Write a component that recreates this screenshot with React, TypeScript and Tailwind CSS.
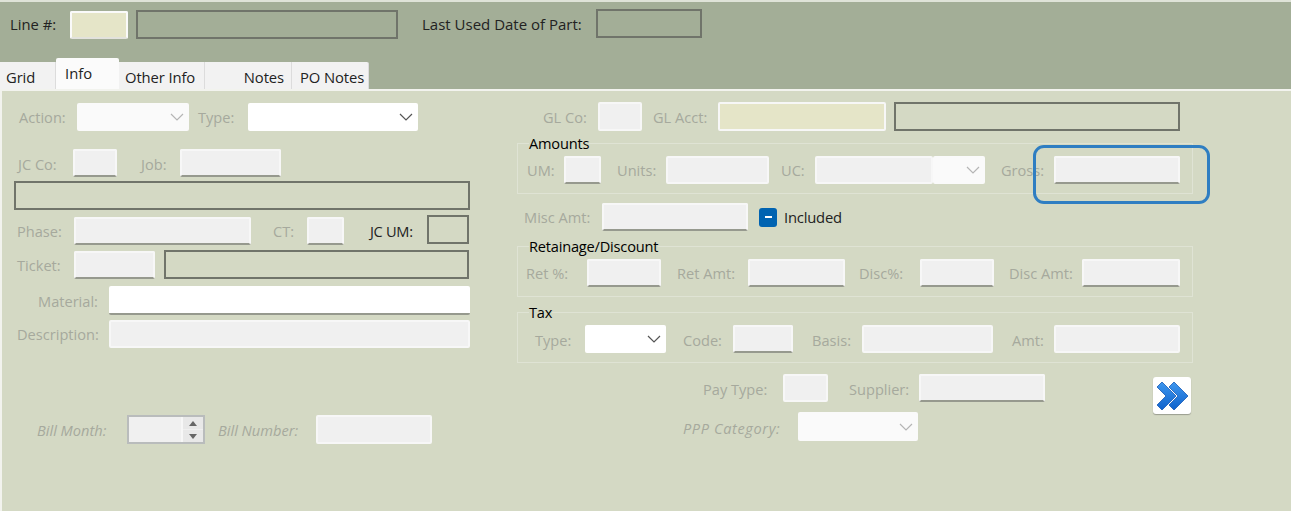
import type { ReactNode } from "react";

const Label = ({ className, children }: { className: string; children: ReactNode }) => (
  <span className={`shrink-0 whitespace-nowrap pt-[1px] text-[14.6px] leading-[28px] text-[#a6a99d] ${className}`}>{children}</span>
);

// sunken field, "line" adds the dark bottom edge some of them have
const Input = ({ className, line }: { className: string; line?: boolean }) => (
  <div
    className={`h-[28px] shrink-0 rounded-[2px] border-2 border-[#f7f7f7] bg-[#f0f0f0] ${line ? "border-b-[#96998e]" : ""} ${className}`}
  />
);

const Box = ({ className }: { className: string }) => (
  <div className={`h-[29px] shrink-0 border-2 border-[#70746a] ${className}`} />
);

const Chevron = ({ color }: { color: string }) => (
  <svg width="14" height="8" viewBox="0 0 14 8" fill="none" stroke={color} strokeWidth="1.2">
    <path d="M1 1l6 6 6-6" />
  </svg>
);

const Select = ({ className, white }: { className: string; white?: boolean }) => (
  <div
    className={`flex h-[28px] shrink-0 items-center justify-end rounded-[2px] pr-[5px] ${white ? "bg-white" : "bg-[#fafafa]"} ${className}`}
  >
    <Chevron color={white ? "#555" : "#b5b5b5"} />
  </div>
);

const Group = ({ title, children }: { title: string; children: ReactNode }) => (
  <div className="relative h-[51px] w-[676px] border border-[#dfe3d4] pt-[12px]">
    <span className="absolute top-[-12px] left-[11px] bg-[#d4d9c4] text-[14.6px] leading-[22px] tracking-[-0.2px] text-black">{title}</span>
    <div className="flex">{children}</div>
  </div>
);

const Tab = ({ className, children }: { className: string; children: ReactNode }) => (
  <div className={`h-[27px] whitespace-nowrap border-r border-[#dcdcdc] bg-[#f2f2f2] text-[14.8px] leading-[31px] tracking-[-0.1px] text-[#222] ${className}`}>
    {children}
  </div>
);

export default function App() {
  return (
    <div className="relative h-[511px] w-[1291px] overflow-hidden bg-[#d4d9c4] font-['Open_Sans',sans-serif]">
      {/* header strip */}
      <div className="h-[89px] border-t-2 border-[#dfe3d8] bg-[#a3ae97]">
        <div className="flex h-[58px] items-start pt-[8px]">
          <span className="ml-[10px] w-[60px] text-[14.8px] leading-[28px] text-[#222]">Line #:</span>
          <div className="mt-[1px] h-[28px] w-[58px] rounded-[2px] border-2 border-[#fafafa] border-b-[#e2e2dc] bg-[#e5e5c8]" />
          <Box className="ml-[8px] w-[262px]" />
          <span className="ml-[24px] w-[174px] whitespace-nowrap text-[15px] leading-[28px] text-[#222]">
            Last Used Date of Part:
          </span>
          <Box className="mt-[-1px] w-[106px]" />
        </div>
        <div className="flex h-[29px] items-end">
          <Tab className="w-[56px] pl-[6px]">Grid</Tab>
          <div className="relative z-10 h-[31px] w-[63px] rounded-t-[2px] bg-[#fbfbfb] pl-[9px] text-[14.8px] leading-[30px] text-[#222]">
            Info
          </div>
          <Tab className="w-[86px] pl-[6px]">Other Info</Tab>
          <Tab className="w-[87px] pr-[7px] text-right">Notes</Tab>
          <Tab className="w-[77px] rounded-tr-[2px] pl-[8px]">PO Notes</Tab>
        </div>
      </div>

      {/* tab body */}
      <div className="flex h-[422px] border-t-2 border-l-2 border-[#f2f3ee]">
        <div className="w-[515px] shrink-0 pt-[12px] [&>div]:-ml-[2px]">
          <div className="flex h-[28px]">
            <Label className="ml-[19px] w-[58px] !pt-0">Action:</Label>
            <Select className="w-[112px]" />
            <Label className="ml-[9px] w-[50px] !pt-0">Type:</Label>
            <Select white className="w-[170px]" />
          </div>
          <div className="mt-[18px] flex h-[28px]">
            <Label className="ml-[18px] w-[55px]">JC Co:</Label>
            <Input line className="w-[44px]" />
            <Label className="ml-[24px] w-[39px]">Job:</Label>
            <Input line className="w-[101px]" />
          </div>
          <div className="mt-[4px] flex">
            <Box className="ml-[14px] w-[456px]" />
          </div>
          <div className="mt-[5px] flex h-[30px] items-end">
            <Label className="ml-[17px] w-[57px] !pt-0">Phase:</Label>
            <Input line className="w-[177px]" />
            <Label className="ml-[22px] w-[34px] !pt-0">CT:</Label>
            <Input line className="w-[37px]" />
            <Label className="ml-[26px] w-[57px] !pt-0 tracking-[-0.3px] !text-[#222]">JC UM:</Label>
            <Box className="mb-[1px] w-[42px]" />
          </div>
          <div className="mt-[5px] flex h-[29px] items-end">
            <Label className="ml-[17px] w-[57px]">Ticket:</Label>
            <Input line className="w-[81px]" />
            <Box className="ml-[9px] w-[305px]" />
          </div>
          <div className="mt-[7px] flex h-[29px]">
            <Label className="ml-[38px] w-[71px]">Material:</Label>
            <div className="h-[29px] w-[361px] rounded-[2px] border-b-2 border-[#96998e] bg-white" />
          </div>
          <div className="mt-[5px] flex h-[28px]">
            <Label className="ml-[17px] w-[92px] !pt-0">Description:</Label>
            <Input className="w-[361px]" />
          </div>
          <div className="mt-[67px] flex h-[29px]">
            <Label className="ml-[37px] w-[90px] italic">Bill Month:</Label>
            <div className="flex h-[29px] w-[78px] border-2 border-[#b9bcbc] bg-[#f0f0f0]">
              <div className="ml-[52px] flex h-[25px] w-[22px] flex-col gap-[1px] border-l-2 border-[#f7f7f7]">
                <div className="flex h-[12px] items-center justify-center bg-[#e8e8e8]">
                  <svg width="8" height="5" viewBox="0 0 8 5" fill="#666">
                    <path d="M4 0l4 5H0z" />
                  </svg>
                </div>
                <div className="flex h-[12px] items-center justify-center bg-[#e8e8e8]">
                  <svg width="8" height="5" viewBox="0 0 8 5" fill="#666">
                    <path d="M4 5l4-5H0z" />
                  </svg>
                </div>
              </div>
            </div>
            <Label className="ml-[13px] w-[98px] italic">Bill Number:</Label>
            <Input className="!h-[29px] w-[116px]" />
          </div>
        </div>

        <div className="w-[774px] shrink-0 pt-[11px]">
          <div className="flex h-[29px]">
            <Label className="ml-[26px] w-[55px]">GL Co:</Label>
            <Input className="!h-[29px] w-[44px]" />
            <Label className="ml-[11px] w-[65px]">GL Acct:</Label>
            <div className="h-[29px] w-[168px] rounded-[2px] border-2 border-[#f7f7f7] bg-[#e5e5c8]" />
            <Box className="ml-[8px] w-[286px]" />
          </div>
          <div className="mt-[12px]">
            <Group title="Amounts">
              <Label className="ml-[9px] w-[37px] !pt-0">UM:</Label>
              <Input line className="w-[37px]" />
              <Label className="ml-[16px] w-[49px] !pt-0">Units:</Label>
              <Input className="w-[103px]" />
              <Label className="ml-[12px] w-[34px] !pt-0">UC:</Label>
              <Input className="w-[118px]" />
              <Select className="w-[52px]" />
              <Label className="ml-[16px] w-[53px] !pt-0">Gross:</Label>
              <Input line className="w-[126px]" />
            </Group>
          </div>
          <div className="mt-[9px] flex h-[28px] items-center">
            <Label className="ml-[7px] w-[78px] !pt-0">Misc Amt:</Label>
            <Input line className="w-[146px]" />
            <div className="ml-[11px] flex h-[19px] w-[18px] items-center justify-center rounded-[3px] bg-[#0063b1]">
              <div className="h-[2px] w-[7px] bg-white" />
            </div>
            <span className="ml-[7px] text-[14.8px] leading-[28px] tracking-[-0.2px] text-[#222]">Included</span>
          </div>
          <div className="mt-[15px]">
            <Group title="Retainage/Discount">
              <Label className="ml-[8px] w-[61px] !pt-0">Ret %:</Label>
              <Input line className="w-[74px]" />
              <Label className="ml-[16px] w-[71px] !pt-0">Ret Amt:</Label>
              <Input line className="w-[97px]" />
              <Label className="ml-[14px] w-[61px] !pt-0">Disc%:</Label>
              <Input line className="w-[74px]" />
              <Label className="ml-[15px] w-[73px] !pt-0">Disc Amt:</Label>
              <Input line className="w-[98px]" />
            </Group>
          </div>
          <div className="mt-[15px]">
            <Group title="Tax">
              <Label className="ml-[17px] w-[50px]">Type:</Label>
              <Select white className="w-[81px]" />
              <Label className="ml-[17px] w-[50px]">Code:</Label>
              <Input line className="w-[60px]" />
              <Label className="ml-[19px] w-[50px]">Basis:</Label>
              <Input className="w-[131px]" />
              <Label className="ml-[19px] w-[42px]">Amt:</Label>
              <Input className="w-[126px]" />
            </Group>
          </div>
          <div className="mt-[11px] flex h-[29px]">
            <Label className="ml-[186px] w-[80px]">Pay Type:</Label>
            <Input className="w-[45px]" />
            <Label className="ml-[21px] w-[70px]">Supplier:</Label>
            <Input line className="w-[126px]" />
            <div className="mt-[3px] ml-[108px] flex h-[37px] w-[38px] shrink-0 items-center justify-center rounded-[3px] bg-white shadow-[0_1px_1px_#9a9d90]">
              <svg width="34" height="30" viewBox="0 0 34 30">
                <defs>
                  <linearGradient id="chev" x1="0" y1="0" x2="0" y2="1">
                    <stop offset="0" stopColor="#3f97ee" />
                    <stop offset="1" stopColor="#0e62cc" />
                  </linearGradient>
                </defs>
                <path d="M2 6l5-5 14 14-14 14-5-5 9-9z" fill="url(#chev)" stroke="#1559b5" strokeWidth="0.8" />
                <path d="M14 6l5-5 14 14-14 14-5-5 9-9z" fill="url(#chev)" stroke="#1559b5" strokeWidth="0.8" />
              </svg>
            </div>
          </div>
          <div className="mt-[9px] flex h-[29px]">
            <Label className="ml-[166px] w-[115px] !pt-[2px] tracking-[0.6px] italic">PPP Category:</Label>
            <Select className="!h-[29px] w-[120px]" />
          </div>
        </div>
      </div>

      {/* callout drawn over the Gross field */}
      <div className="absolute top-[145px] left-[1033px] h-[59px] w-[177px] rounded-[11px] border-[3px] border-[#2f7ec2]" />
    </div>
  );
}
